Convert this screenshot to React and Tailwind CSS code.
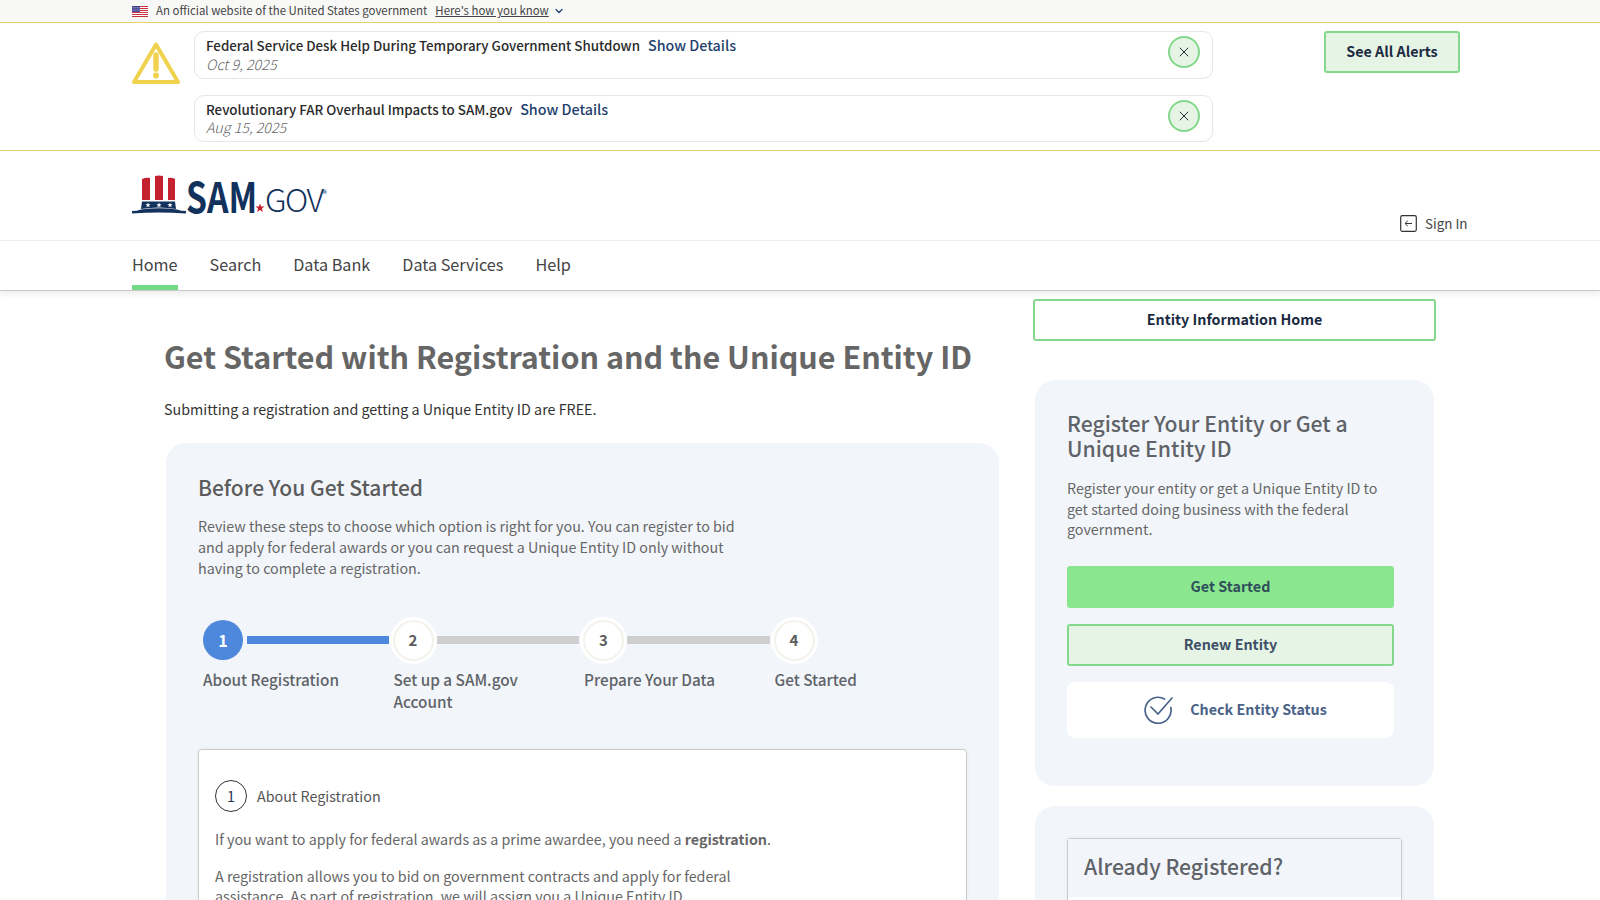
import React from "react";
import { X, ChevronDown } from "lucide-react";

function Flag() {
  return (
    <svg width="16" height="11" viewBox="0 0 16 11" className="shrink-0">
      <rect width="16" height="11" fill="#fff" />
      {[0, 2, 4, 6, 8, 10].map((y) => (
        <rect key={y} y={y} width="16" height="1" fill="#c8313e" />
      ))}
      <rect width="8" height="6" fill="#3c3b8e" />
      {[1, 3, 5, 7].map((x) => [1.2, 3, 4.8].map((y) => <rect key={x + "-" + y} x={x - 0.3} y={y - 0.3} width="0.8" height="0.8" fill="#fff" />))}
    </svg>
  );
}

function Warning() {
  return (
    <svg width="48" height="44" viewBox="0 0 48 44" className="shrink-0">
      <path d="M24 3.5 L46 41 L2 41 Z" fill="none" stroke="#f0d24e" strokeWidth="4" strokeLinejoin="round" />
      <path d="M24 14 L24 28" stroke="#f0d24e" strokeWidth="5.5" strokeLinecap="round" />
      <circle cx="24" cy="34.5" r="3" fill="#f0d24e" />
    </svg>
  );
}

function Hat() {
  return (
    <svg width="54" height="40" viewBox="0 0 54 40" className="shrink-0">
      <path d="M10 4 Q14 2 18 3 L18 25 L10 25 Z" fill="#c4222e" />
      <path d="M23 1 Q27 0 31 1 L31 25 L23 25 Z" fill="#c4222e" />
      <path d="M36 3 Q40 2 43 4 L43 25 L36 25 Z" fill="#c4222e" />
      <path d="M10 26.5 L43 26.5 L44 34 Q27 31 9 34 Z" fill="#12315c" />
      <path d="M0 36 Q5 36 9 34.5 Q27 32 45 34.5 Q49 36 54 36 L54 38.5 Q27 36.5 0 38.5 Z" fill="#12315c" />
      {[16, 27, 38].map((x) => (
        <polygon key={x} transform={`translate(${x} 30)`} points="0,-2.6 0.7,-0.8 2.6,-0.8 1.1,0.4 1.6,2.3 0,1.2 -1.6,2.3 -1.1,0.4 -2.6,-0.8 -0.7,-0.8" fill="#fff" />
      ))}
    </svg>
  );
}

function Logo() {
  return (
    <div className="flex items-end h-[41px] w-[200px]">
      <Hat />
      <span className="w-[68px] origin-left scale-x-[0.8] whitespace-nowrap text-[42px] leading-[32px] font-bold text-[#12315c] h-[36px]">SAM</span>
      <svg width="10" height="10" viewBox="-5 -5 10 10" className="mb-[2px] ml-[1px] shrink-0">
        <polygon points="0,-4.6 1.2,-1.4 4.6,-1.4 1.9,0.6 2.9,4 0,2 -2.9,4 -1.9,0.6 -4.6,-1.4 -1.2,-1.4" fill="#c4222e" />
      </svg>
      <span className="text-[32px] leading-[32px] font-light text-[#12315c] tracking-[-1.5px] h-[33px]">GOV</span>
      <span className="text-[9px] leading-none text-[#12315c] self-start mt-[15px]">®</span>
    </div>
  );
}

function Alert({ title, date, box, dateBox }) {
  return (
    <div className={`relative rounded-[10px] border border-[#e6e6e6] bg-white pl-[11px] ${box}`}>
      <div className="flex items-baseline h-[22px] mt-[2px] text-[13.35px] leading-[22px]">
        <span className="font-medium text-[#2a2a2a]">{title}</span>
        <span className="ml-[8px] text-[14.3px] font-medium text-[#1f3f6e]">Show Details</span>
      </div>
      <div className={`text-[14.3px] leading-[18px] italic font-light text-[#666] ${dateBox}`}>{date}</div>
      <button className="absolute right-[12px] top-[4px] w-[32px] h-[32px] rounded-full border-2 border-[#84d88c] bg-[#e6f4e6] flex items-center justify-center">
        <X size={16} strokeWidth={1.5} color="#1b2b41" />
      </button>
    </div>
  );
}

function Step({ n, active, label, line }) {
  return (
    <div className="w-[190.5px] shrink-0">
      <div className="flex items-center h-[47px]">
        {active ? (
          <div className="w-[40px] h-[40px] ml-[5px] rounded-full bg-[#4e88dc] text-white font-bold text-[16px] flex items-center justify-center">{n}</div>
        ) : (
          <div className="w-[47px] h-[47px] ml-[1px] mt-[1px] rounded-full bg-white outline-2 -outline-offset-5 outline-[#f3f2ec] text-[#5c5c5c] font-semibold text-[15px] flex items-center justify-center shrink-0">{n}</div>
        )}
        {line && <div className={`h-[8px] mt-[1px] ${active ? "ml-[4px] w-[142px] bg-[#4e88dc]" : "w-[142.5px] bg-[#cfcfcf]"}`} />}
      </div>
      <div className="mt-[5px] ml-[5px] text-[15.3px] leading-[22px] font-medium text-[#5f6368] w-[140px]">{label}</div>
    </div>
  );
}

export default function App() {
  return (
    <div className="h-[900px] overflow-hidden bg-white font-['Noto_Sans_CJK_SC',sans-serif] text-[#333]">
      <div className="h-[23px] bg-[#f8f8f6] border-b border-[#e8cf6a] pl-[132px] flex items-center text-[11.45px]">
        <Flag />
        <span className="ml-[8px] text-[#444]">An official website of the United States government</span>
        <span className="ml-[8px] underline text-[#444]">Here's how you know</span>
        <ChevronDown size={12} strokeWidth={2.4} className="ml-[4px] text-[#1f3f6e]" />
      </div>

      <div className="h-[128px] border-b border-[#e9d36c] flex pl-[132px] pt-[8px]">
        <div className="w-[62px] pt-[10px]">
          <Warning />
        </div>
        <div className="w-[1019px]">
          <Alert title="Federal Service Desk Help During Temporary Government Shutdown" date="Oct 9, 2025" box="h-[48px]" dateBox="-mt-[1px]" />
          <Alert title="Revolutionary FAR Overhaul Impacts to SAM.gov" date="Aug 15, 2025" box="h-[47px] mt-[16px]" dateBox="-mt-[2px]" />
        </div>
        <button className="ml-[111px] w-[136px] h-[42px] rounded-[3px] border-2 border-[#84d88c] bg-[#e6f4e6] pb-[2px] text-[14.3px] font-bold text-[#1b2b41]">See All Alerts</button>
      </div>

      <div className="h-[90px] border-b border-[#f0f0f0] flex pl-[132px] pt-[23px] relative">
        <Logo />
        <div className="absolute left-[1400px] top-[62px] flex items-center">
          <svg width="17" height="17" viewBox="0 0 17 17">
            <rect x="0.7" y="0.7" width="15.6" height="15.6" rx="1.5" fill="none" stroke="#333" strokeWidth="1.2" />
            <path d="M12 8.5 H5 M7.8 5.8 L5 8.5 L7.8 11.2" fill="none" stroke="#333" strokeWidth="1" />
          </svg>
          <span className="ml-[8px] text-[13.4px] leading-[20px] text-[#444]">Sign In</span>
        </div>
      </div>

      <nav className="relative z-10 h-[50px] border-b border-[#c9c9c9] shadow-[0_3px_6px_rgba(0,0,0,0.08)] bg-white flex pl-[132px] gap-[32px] text-[16.2px] text-[#444]">
        <div className="relative h-[49px] leading-[47px]">
          Home
          <div className="absolute left-0 right-0 bottom-0 h-[5px] bg-[#72d987]" />
        </div>
        <div className="leading-[47px]">Search</div>
        <div className="leading-[47px]">Data Bank</div>
        <div className="leading-[47px]">Data Services</div>
        <div className="leading-[47px]">Help</div>
      </nav>

      <div className="flex">
        <main className="w-[1033px] shrink-0 pl-[164px]">
          <h1 className="mt-[43px] text-[30.5px] leading-[44px] font-bold text-[#666] whitespace-nowrap">Get Started with Registration and the Unique Entity ID</h1>
          <p className="mt-[19px] text-[14.3px] leading-[24px] text-[#333]">Submitting a registration and getting a Unique Entity ID are FREE.</p>
          <section className="mt-[22px] ml-[2px] w-[833px] h-[600px] rounded-[20px] bg-[#f2f6fb] px-[32px] pt-[28px]">
            <h2 className="text-[21px] leading-[32px] font-medium text-[#5c5c5c]">Before You Get Started</h2>
            <p className="mt-[12px] w-[560px] text-[14.3px] leading-[21px] text-[#666]">
              Review these steps to choose which option is right for you. You can register to bid and apply for federal awards or you can request a Unique Entity ID only without having to complete a registration.
            </p>
            <div className="mt-[38px] flex">
              <Step n="1" active label="About Registration" line />
              <Step n="2" label="Set up a SAM.gov Account" line />
              <Step n="3" label="Prepare Your Data" line />
              <Step n="4" label="Get Started" />
            </div>
            <div className="mt-[37px] w-[769px] h-[300px] rounded-[4px] border border-[#ccc] bg-white shadow-[0_0_4px_rgba(0,0,0,0.06)] px-[16px] pt-[30px]">
              <div className="flex items-center">
                <div className="w-[32px] h-[32px] rounded-full border border-[#333] flex items-center justify-center text-[14.3px] text-[#2a2f55]">1</div>
                <span className="ml-[10px] text-[14.3px] text-[#555]">About Registration</span>
              </div>
              <p className="mt-[15px] text-[14.3px] leading-[24px] text-[#666]">
                If you want to apply for federal awards as a prime awardee, you need a <strong className="font-bold">registration</strong>.
              </p>
              <p className="mt-[15px] w-[540px] text-[14.3px] leading-[20px] text-[#666]">
                A registration allows you to bid on government contracts and apply for federal assistance. As part of registration, we will assign you a Unique Entity ID.
              </p>
            </div>
          </section>
        </main>

        <aside className="w-[403px] shrink-0 pt-[8px]">
          <button className="w-[403px] h-[42px] rounded-[3px] border-2 border-[#84d88c] bg-white pb-[2px] text-[14.3px] font-bold text-[#1b2b41]">Entity Information Home</button>
          <section className="mt-[39px] ml-[2px] w-[399px] h-[406px] rounded-[20px] bg-[#f2f6fb] pl-[32px] pr-[40px] pt-[30px]">
            <h2 className="text-[21.2px] leading-[25px] font-medium text-[#5f6368] w-[300px]">Register Your Entity or Get a Unique Entity ID</h2>
            <p className="mt-[18px] text-[14.3px] leading-[20.7px] text-[#666] w-[327px]">
              Register your entity or get a Unique Entity ID to get started doing business with the federal government.
            </p>
            <button className="mt-[26px] block w-[327px] h-[42px] rounded-[3px] bg-[#8ae68f] pb-[2px] text-[14.3px] font-bold text-[#2f4f5a]">Get Started</button>
            <button className="mt-[16px] block w-[327px] h-[42px] rounded-[3px] border-2 border-[#84d88c] bg-[#e6f4e6] pb-[2px] text-[14.3px] font-bold text-[#3d4f66]">Renew Entity</button>
            <button className="mt-[16px] w-[327px] h-[56px] rounded-[8px] bg-white pl-[10px] pb-[2px] flex items-center justify-center text-[14.3px] font-bold text-[#4a6288]">
              <svg width="30" height="28" viewBox="0 0 30 28" className="mr-[16px] mt-[2px]">
                <path d="M20.5 3 A13 13 0 1 0 26.8 11.5" fill="none" stroke="#4a6288" strokeWidth="1.7" strokeLinecap="round" />
                <path d="M7 11 L14 18 L28 2" fill="none" stroke="#4a6288" strokeWidth="1.7" strokeLinecap="round" />
              </svg>
              Check Entity Status
            </button>
          </section>
          <section className="mt-[20px] ml-[2px] w-[399px] h-[300px] rounded-[20px] bg-[#f2f6fb] pl-[32px] pt-[32px]">
            <div className="w-[335px] h-[200px] rounded-[3px] border border-[#ccc] bg-white shadow-[0_0_4px_rgba(0,0,0,0.06)]">
              <div className="h-[58px] bg-[#f2f6fb] pl-[16px] pt-[11px] text-[21.2px] leading-[32px] font-medium text-[#5f6368]">Already Registered?</div>
            </div>
          </section>
        </aside>
      </div>
    </div>
  );
}
